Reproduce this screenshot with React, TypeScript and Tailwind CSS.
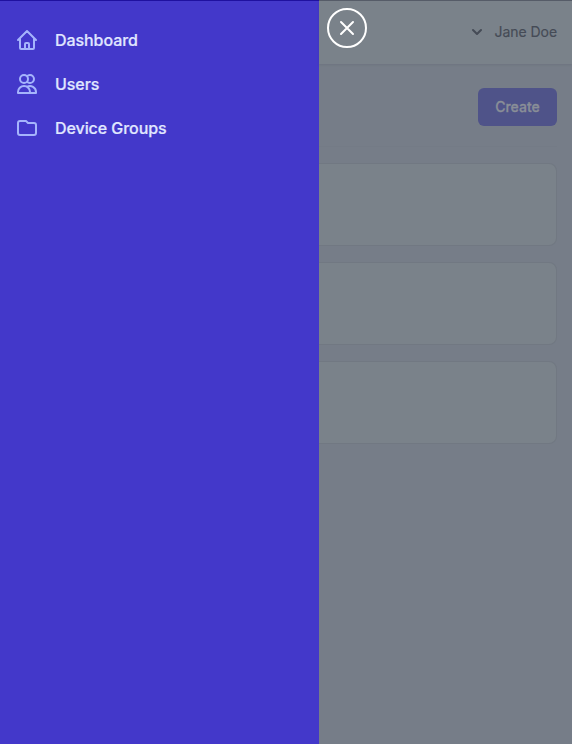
import React from "react";

const navigation = [
  {
    name: "Dashboard",
    path: "M3 12l2-2m0 0l7-7 7 7M5 10v10a1 1 0 001 1h3m10-11l2 2m-2-2v10a1 1 0 01-1 1h-3m-6 0a1 1 0 001-1v-4a1 1 0 011-1h2a1 1 0 011 1v4a1 1 0 001 1m-6 0h6",
  },
  {
    name: "Users",
    path: "M12 4.354a4 4 0 110 5.292M15 21H3v-1a6 6 0 0112 0v1zm0 0h6v-1a6 6 0 00-9-5.197M13 7a4 4 0 11-8 0 4 4 0 018 0z",
  },
  {
    name: "Device Groups",
    path: "M3 7v10a2 2 0 002 2h14a2 2 0 002-2V9a2 2 0 00-2-2h-6l-2-2H5a2 2 0 00-2 2z",
  },
];

function Icon({ path, className }: { path: string; className: string }) {
  return (
    <svg className={className} fill="none" viewBox="0 0 24 24" stroke="currentColor" strokeWidth={2} strokeLinecap="round" strokeLinejoin="round" aria-hidden="true">
      <path d={path} />
    </svg>
  );
}

function Sidebar() {
  return (
    <aside className="w-[319px] shrink-0 border-t border-[#1f119f] bg-[#4338ca] pt-[19px] pr-2 pl-[7px]">
      <nav className="flex flex-col gap-1">
        {navigation.map((item) => (
          <a key={item.name} href="#" className="flex h-10 items-center rounded-md px-2 text-base font-medium tracking-[-0.004em] text-[#e0e7ff] [-webkit-text-stroke:0.2px_#e0e7ff]">
            <Icon path={item.path} className="mr-4 size-6 shrink-0 text-[#a5b4fc]" />
            {item.name}
          </a>
        ))}
      </nav>
    </aside>
  );
}

export default function App() {
  return (
    <div className="flex h-[744px] w-[572px] overflow-hidden bg-[#767d88] font-[Inter,sans-serif]">
      <Sidebar />
      <div className="flex min-w-0 flex-1 flex-col">
        <header className="flex h-16 shrink-0 items-start justify-between border-t border-[#565c68] bg-[#7a828a] pt-[7px] pr-[15px] pl-2 shadow-[0_1px_2px_rgba(60,66,80,0.15)]">
          <button aria-label="Close sidebar" className="flex size-10 items-center justify-center rounded-full border-2 border-white text-white">
            <Icon path="M6 18L18 6M6 6l12 12" className="size-6 shrink-0" />
          </button>
          <div className="flex h-12 items-center text-[#454b56]">
            <svg className="mr-2 size-5" viewBox="0 0 20 20" fill="currentColor" aria-hidden="true">
              <path fillRule="evenodd" clipRule="evenodd" d="M5.293 7.293a1 1 0 011.414 0L10 10.586l3.293-3.293a1 1 0 111.414 1.414l-4 4a1 1 0 01-1.414 0l-4-4a1 1 0 010-1.414z" />
            </svg>
            <span className="text-sm tracking-[-0.004em] [-webkit-text-stroke:0.15px_#454b56]">Jane Doe</span>
          </div>
        </header>
        <main className="flex flex-col pr-[15px]">
          <div className="flex h-[83px] items-start justify-end border-b border-[#747b86] pt-6">
            <button className="h-[38px] w-[79px] rounded-md bg-[#4f5389] text-sm font-medium text-[#898e97] [-webkit-text-stroke:0.3px_#898e97]">Create</button>
          </div>
          <div className="mt-4 flex flex-col gap-4">
            {[0, 1, 2].map((card) => (
              <section key={card} className="h-[83px] rounded-r-lg border-y border-r border-[#717882] bg-[#7a828a]" />
            ))}
          </div>
        </main>
      </div>
    </div>
  );
}
